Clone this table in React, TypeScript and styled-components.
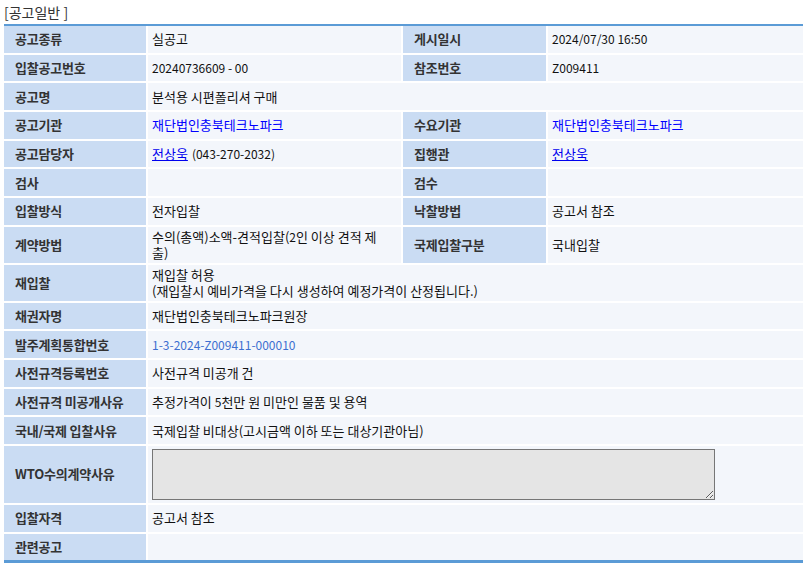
import React from "react";
import styled, { createGlobalStyle } from "styled-components";

const GlobalStyle = createGlobalStyle`
  html, body {
    margin: 0;
    padding: 0;
    background: #ffffff;
  }
  body {
    font-family: "Noto Sans CJK KR", "Noto Sans", sans-serif;
    font-size: 13px;
    color: #111111;
  }
`;

const Page = styled.div`
  width: 806px;
  padding: 0 3px 0 4px;
  box-sizing: border-box;
`;

const SectionTitle = styled.div`
  height: 24px;
  display: flex;
  align-items: center;
  font-size: 14px;
  color: #333333;
`;

const InfoGrid = styled.div`
  display: grid;
  grid-template-columns: 142px 253px 143px 1fr;
  gap: 2px;
  background: #ffffff;
  border-top: 2px solid #5b9bd6;
  border-bottom: 3px solid #5b9bd6;
`;

const Label = styled.div`
  background: #cadcf3;
  color: #333333;
  font-weight: bold;
  min-height: 26.67px;
  box-sizing: border-box;
  padding: 2px 6px 2px 11px;
  display: flex;
  align-items: center;
  line-height: 16px;
  letter-spacing: -0.2px;
`;

const Value = styled.div<{ $span?: number }>`
  grid-column: span ${(p) => p.$span ?? 1};
  background: #f3f6fb;
  min-height: 26.67px;
  box-sizing: border-box;
  padding: 2px 10px 2px 4px;
  display: flex;
  align-items: center;
  line-height: 16px;
`;

const TextBlock = styled.div`
  display: flex;
  flex-direction: column;
`;

const Latin = styled.span`
  font-size: 12px;
`;

const OrgLink = styled.a`
  color: #0000ff;
  text-decoration: none;
  cursor: pointer;
`;

const PersonLink = styled.a`
  color: #0000ee;
  text-decoration: underline;
  cursor: pointer;
  margin-right: 4px;
`;

const PlanNumber = styled.span`
  color: #3d6fd0;
  font-size: 12px;
`;

const ReasonBox = styled.textarea`
  width: 563px;
  height: 51px;
  margin: 1px 0;
  box-sizing: border-box;
  background: #e5e5e5;
  border: 1px solid #767676;
  border-radius: 0;
  resize: both;
  font-family: inherit;
  font-size: 12px;
  padding: 2px;
  outline: none;
  display: block;
`;

export default function App() {
  return (
    <>
      <GlobalStyle />
      <Page>
        <SectionTitle>[공고일반 ]</SectionTitle>
        <InfoGrid>
          <Label>공고종류</Label>
          <Value>실공고</Value>
          <Label>게시일시</Label>
          <Value>
            <Latin>2024/07/30 16:50</Latin>
          </Value>

          <Label>입찰공고번호</Label>
          <Value>
            <Latin>20240736609 - 00</Latin>
          </Value>
          <Label>참조번호</Label>
          <Value>
            <Latin>Z009411</Latin>
          </Value>

          <Label>공고명</Label>
          <Value $span={3}>분석용 시편폴리셔 구매</Value>

          <Label>공고기관</Label>
          <Value>
            <OrgLink>재단법인충북테크노파크</OrgLink>
          </Value>
          <Label>수요기관</Label>
          <Value>
            <OrgLink>재단법인충북테크노파크</OrgLink>
          </Value>

          <Label>공고담당자</Label>
          <Value>
            <span>
              <PersonLink>전상욱</PersonLink>
              <Latin>(043-270-2032)</Latin>
            </span>
          </Value>
          <Label>집행관</Label>
          <Value>
            <PersonLink>전상욱</PersonLink>
          </Value>

          <Label>검사</Label>
          <Value />
          <Label>검수</Label>
          <Value />

          <Label>입찰방식</Label>
          <Value>전자입찰</Value>
          <Label>낙찰방법</Label>
          <Value>공고서 참조</Value>

          <Label>계약방법</Label>
          <Value>
            <span>
              수의(총액)소액-견적입찰(<Latin>2</Latin>인 이상 견적 제출)
            </span>
          </Value>
          <Label>국제입찰구분</Label>
          <Value>국내입찰</Value>

          <Label>재입찰</Label>
          <Value $span={3}>
            <TextBlock>
              <span>재입찰 허용</span>
              <span>(재입찰시 예비가격을 다시 생성하여 예정가격이 산정됩니다.)</span>
            </TextBlock>
          </Value>

          <Label>채권자명</Label>
          <Value $span={3}>재단법인충북테크노파크원장</Value>

          <Label>발주계획통합번호</Label>
          <Value $span={3}>
            <PlanNumber>1-3-2024-Z009411-000010</PlanNumber>
          </Value>

          <Label>사전규격등록번호</Label>
          <Value $span={3}>사전규격 미공개 건</Value>

          <Label>사전규격 미공개사유</Label>
          <Value $span={3}>
            <span>
              추정가격이 <Latin>5</Latin>천만 원 미만인 물품 및 용역
            </span>
          </Value>

          <Label>국내/국제 입찰사유</Label>
          <Value $span={3}>국제입찰 비대상(고시금액 이하 또는 대상기관아님)</Value>

          <Label>WTO수의계약사유</Label>
          <Value $span={3}>
            <ReasonBox readOnly />
          </Value>

          <Label>입찰자격</Label>
          <Value $span={3}>공고서 참조</Value>

          <Label>관련공고</Label>
          <Value $span={3} />
        </InfoGrid>
      </Page>
    </>
  );
}
